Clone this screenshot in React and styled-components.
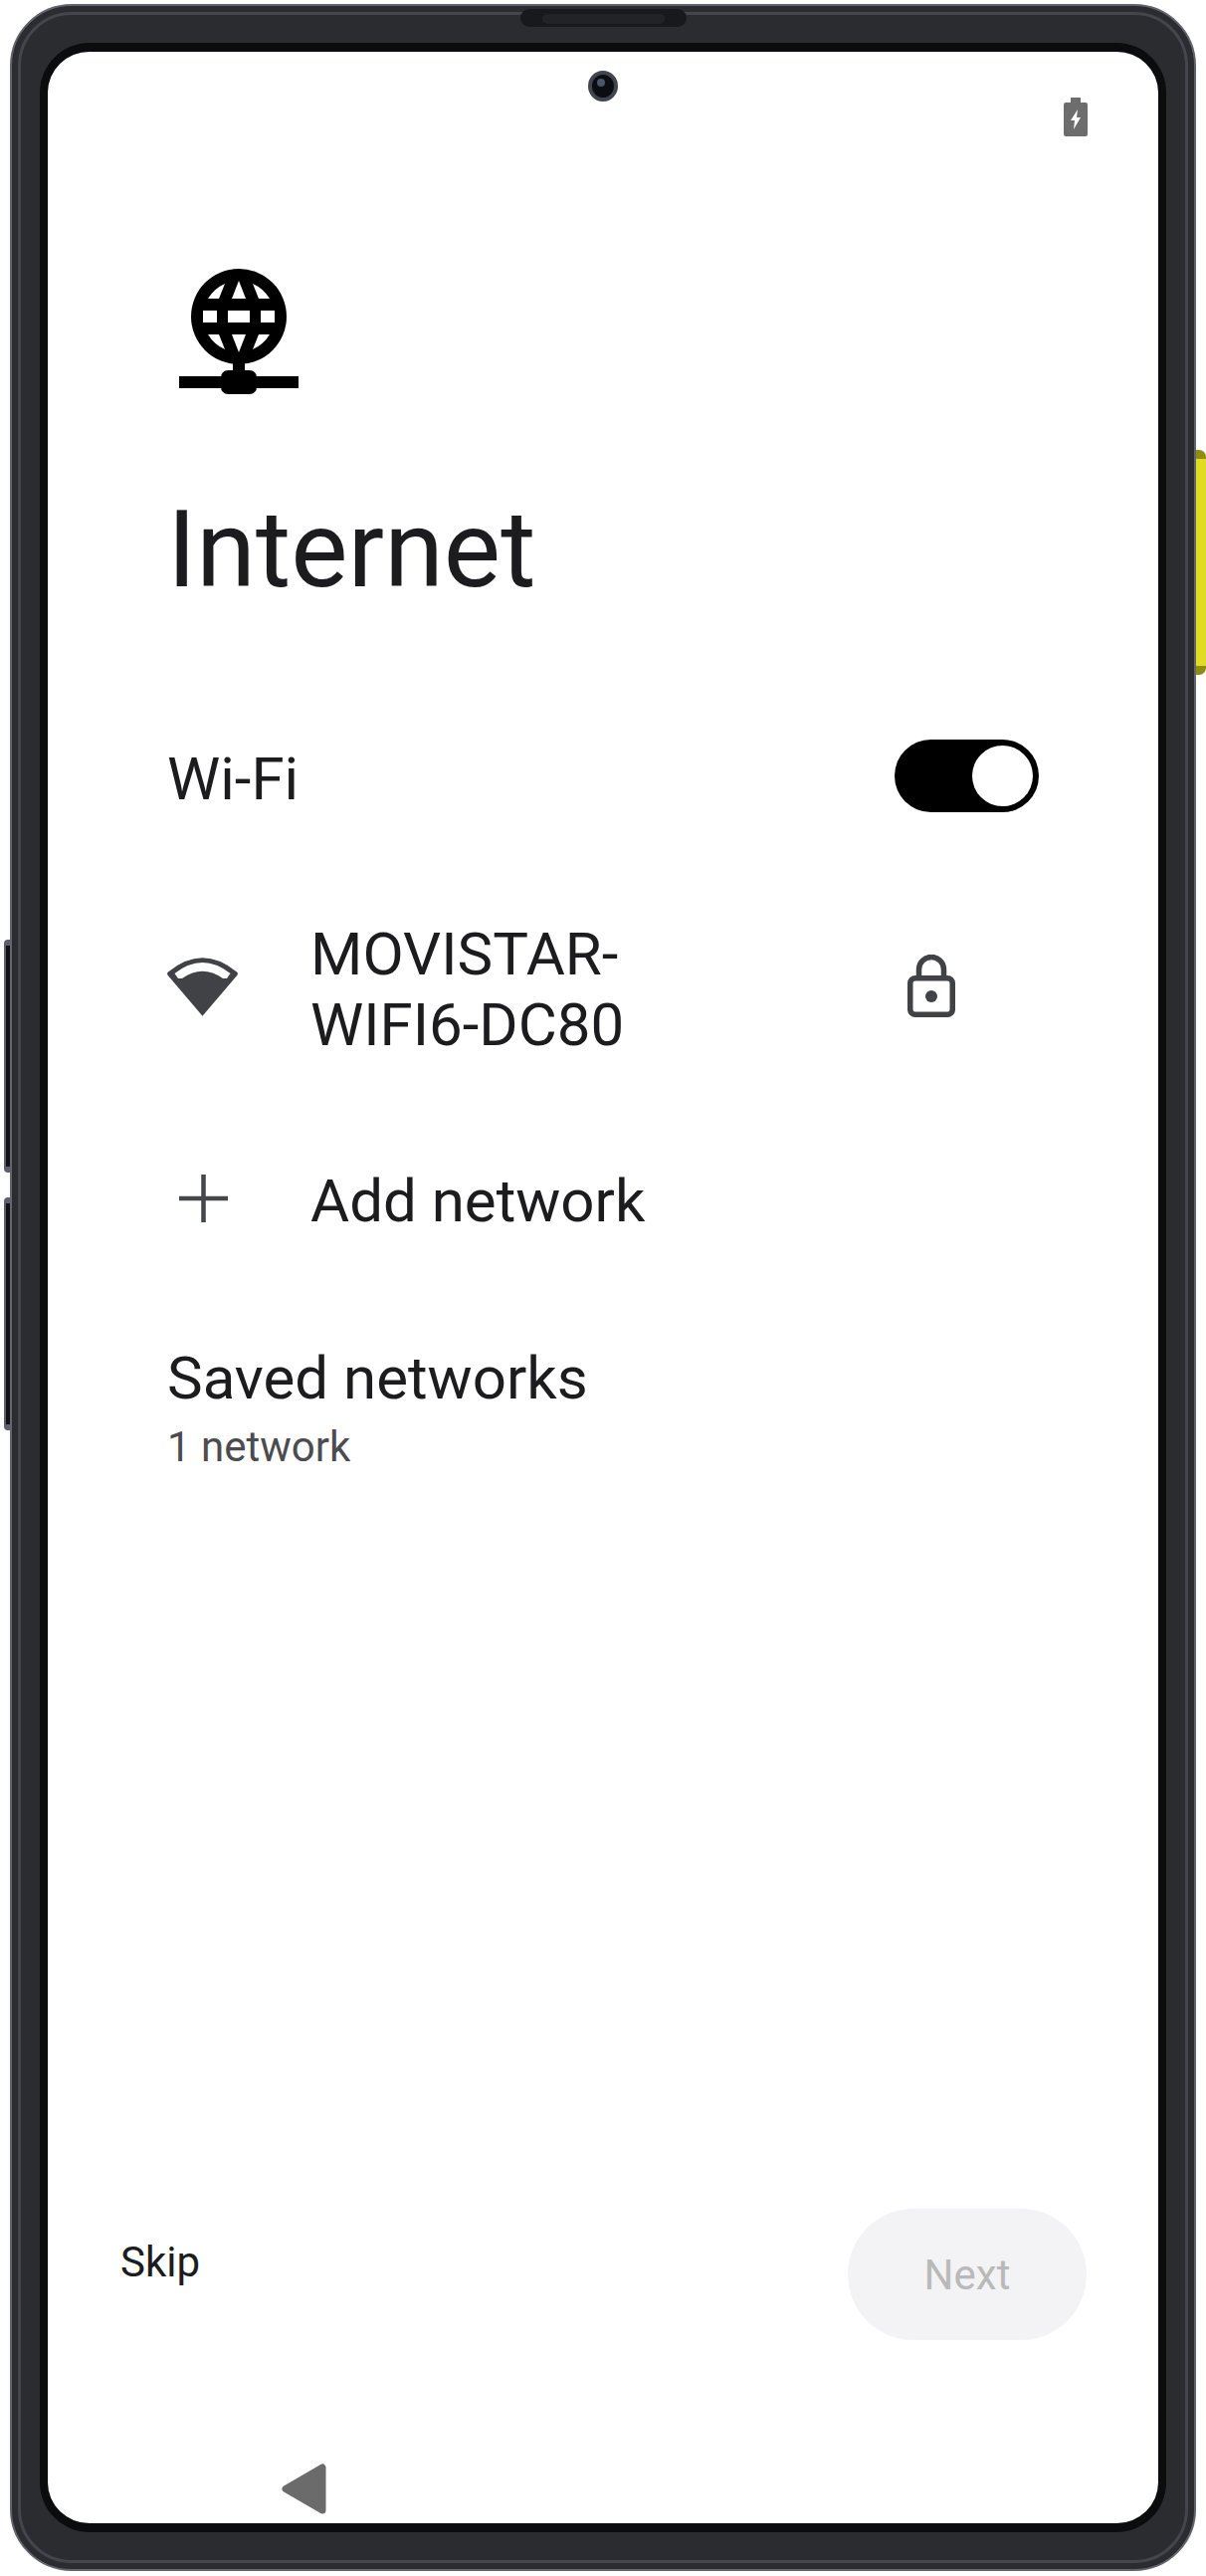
import React from "react";
import styled, { createGlobalStyle } from "styled-components";

const Global = createGlobalStyle`
  html, body { margin: 0; padding: 0; background: #fff; }
  * { box-sizing: border-box; }
`;

const Page = styled.div`
  position: relative;
  width: 1212px;
  height: 2588px;
  padding: 4px 10px 5px;
  background: #fff;
  font-family: Roboto, "Liberation Sans", sans-serif;
  overflow: hidden;
`;

const VolumeKey = styled.div`
  position: absolute;
  left: 4px;
  top: ${(p) => p.$top}px;
  width: 7px;
  height: 234px;
  background: #101114;
  border: 2px solid #5d606b;
  border-right: 0;
  border-width: 6px 0 6px 2px;
  border-radius: 4px 0 0 4px;
`;

const PowerKey = styled.div`
  position: absolute;
  left: 1202px;
  top: 452px;
  width: 10px;
  height: 226px;
  background: #dfdc22;
  border-top: 9px solid #8f8c14;
  border-bottom: 9px solid #8f8c14;
  border-radius: 0 7px 7px 0;
`;

const Frame = styled.div`
  position: relative;
  height: 100%;
  padding: 6px;
  background: #2b2c30;
  border: 2px solid #62646e;
  border-radius: 62px;
`;

const Rim = styled.div`
  height: 100%;
  padding: 28px 19px;
  background: #2b2c30;
  border: 3px solid #44454d;
  border-radius: 54px;
`;

const Speaker = styled.div`
  position: absolute;
  left: 511px;
  top: 3px;
  width: 167px;
  height: 18px;
  padding: 5px 22px;
  background: #18191d;
  border-radius: 9px;
`;

const SpeakerGrille = styled.div`
  height: 10px;
  background: #222327;
  border-radius: 5px;
`;

const Screen = styled.div`
  position: relative;
  display: flex;
  flex-direction: column;
  height: 100%;
  background: #fff;
  border: solid #0b0c0e;
  border-width: 9px 8px;
  border-radius: 50px;
  color: #1c1c1e;
`;

const Camera = styled.div`
  position: absolute;
  left: 543px;
  top: 19px;
  width: 30px;
  height: 31px;
  background: #0b0d12;
  border: 4px solid #41454f;
  border-radius: 50%;
`;

const Lens = styled.div`
  width: 8px;
  height: 8px;
  margin: 4px 0 0 5px;
  background: #4b566b;
  border-radius: 50%;
`;

const StatusBar = styled.div`
  display: flex;
  justify-content: flex-end;
  padding: 46px 71px 0 0;
  height: 85px;
  svg { display: block; }
`;

const Content = styled.div`
  padding: 133px 120px 0;
`;

const HeroIcon = styled.svg`
  display: block;
  margin-left: 12px;
`;

const Title = styled.h1`
  margin: 95px 0 0 0;
  font-size: 108px;
  line-height: 123px;
  font-weight: 400;
`;

const WifiRow = styled.div`
  display: flex;
  align-items: center;
  justify-content: space-between;
  margin-top: 129px;
`;

const RowText = styled.div`
  font-size: 60px;
  line-height: 71px;
  font-weight: 400;
`;

const NetworkName = styled(RowText)`
  max-width: 400px;
`;

const Toggle = styled.div`
  width: 145px;
  height: 73px;
  margin-bottom: 6px;
  padding: 6px;
  display: flex;
  justify-content: flex-end;
  background: #000;
  border-radius: 37px;
`;

const Thumb = styled.div`
  width: 61px;
  height: 61px;
  background: #fff;
  border-radius: 50%;
`;

const NetworkRow = styled.div`
  display: grid;
  grid-template-columns: 144px 1fr 132px;
  align-items: center;
  margin-top: ${(p) => p.$top}px;
  svg { display: block; }
`;

const IconCell = styled.div`
  margin: 0 0 6px ${(p) => p.$left || 0}px;
`;

const Saved = styled.div`
  margin-top: 107px;
`;

const SubText = styled.div`
  font-size: 42px;
  line-height: 49px;
  color: #4c4c50;
  margin-top: 9px;
`;

const Footer = styled.div`
  display: flex;
  justify-content: space-between;
  margin-top: auto;
  padding: 0 72px 0 73px;
`;

const Skip = styled.div`
  font-size: 42px;
  line-height: 49px;
  margin-top: 29px;
`;

const Next = styled.div`
  width: 240px;
  height: 132px;
  display: flex;
  align-items: center;
  justify-content: center;
  background: #f3f3f5;
  color: #b9b9b9;
  font-size: 42px;
  border-radius: 66px;
`;

const NavBar = styled.div`
  padding: 124px 0 9px 235px;
  svg { display: block; }
`;

const Globe = () => (
  <HeroIcon width="120" height="126" viewBox="180 270 120 126">
    <circle cx="240" cy="318" r="48" fill="#000" />
    <g fill="#fff">
      <path d="M240 282 L247 300 H233 Z" />
      <path d="M226 285 L220 300 H209 Q215 290 226 285 Z" />
      <path d="M254 285 L260 300 H271 Q265 290 254 285 Z" />
      <rect x="204" y="312" width="14" height="12" />
      <rect x="229" y="312" width="22" height="12" />
      <rect x="262" y="312" width="14" height="12" />
      <path d="M240 354 L247 336 H233 Z" />
      <path d="M226 351 L220 336 H209 Q215 346 226 351 Z" />
      <path d="M254 351 L260 336 H271 Q265 346 254 351 Z" />
    </g>
    <rect x="234" y="364" width="12" height="10" fill="#000" />
    <rect x="180" y="378" width="120" height="12" fill="#000" />
    <rect x="222" y="372" width="36" height="24" rx="7" fill="#000" />
  </HeroIcon>
);

const Battery = () => (
  <svg width="24" height="39" viewBox="0 0 24 39">
    <path d="M7 0 H17 V5 H22 Q24 5 24 7 V37 Q24 39 22 39 H2 Q0 39 0 37 V7 Q0 5 2 5 H7 Z" fill="#6d6d6d" />
    <path d="M14 12 L7 23 H11 L10 32 L17 20 H13 Z" fill="#fff" />
  </svg>
);

const WifiIcon = () => (
  <svg width="71" height="59" viewBox="0 0 71 59">
    <path d="M35.5 58.7 L0.8 18 Q-0.8 16 1 14.5 Q35.5 -14 70 14.5 Q71.8 16 70.2 18 Z" fill="#414246" />
    <path d="M7.5 16 Q35.5 -6 63.5 16 L60 21 H56 Q35.5 6.4 15 21 H11 Z" fill="#fff" />
  </svg>
);

const LockIcon = () => (
  <svg width="48" height="64" viewBox="0 0 48 64" fill="none">
    <path d="M11.5 22 V15 A12.5 12.5 0 0 1 36.5 15 V22" stroke="#414246" strokeWidth="5.5" />
    <rect x="2.75" y="23.75" width="42.5" height="36.5" rx="5" stroke="#414246" strokeWidth="5.5" />
    <circle cx="24" cy="42" r="6" fill="#414246" />
  </svg>
);

const PlusIcon = () => (
  <svg width="49" height="48" viewBox="0 0 49 48">
    <path d="M24.5 0 V48 M0 24 H49" stroke="#46474c" strokeWidth="4.5" />
  </svg>
);

const BackIcon = () => (
  <svg width="46" height="51" viewBox="0 0 46 51">
    <path d="M4 25.5 L41 4 V47 Z" fill="#6b6b6b" stroke="#6b6b6b" strokeWidth="7" strokeLinejoin="round" />
  </svg>
);

export default function App() {
  return (
    <Page>
      <Global />
      <VolumeKey $top={944} />
      <VolumeKey $top={1203} />
      <PowerKey />
      <Frame>
        <Speaker>
          <SpeakerGrille />
        </Speaker>
        <Rim>
          <Screen>
            <Camera>
              <Lens />
            </Camera>
            <StatusBar>
              <Battery />
            </StatusBar>
            <Content>
              <Globe />
              <Title>Internet</Title>
              <WifiRow>
                <RowText>Wi-Fi</RowText>
                <Toggle>
                  <Thumb />
                </Toggle>
              </WifiRow>
              <NetworkRow $top={101}>
                <IconCell>
                  <WifiIcon />
                </IconCell>
                <NetworkName>MOVISTAR-WIFI6-DC80</NetworkName>
                <IconCell>
                  <LockIcon />
                </IconCell>
              </NetworkRow>
              <NetworkRow $top={106}>
                <IconCell $left={12}>
                  <PlusIcon />
                </IconCell>
                <RowText>Add network</RowText>
              </NetworkRow>
              <Saved>
                <RowText>Saved networks</RowText>
                <SubText>1 network</SubText>
              </Saved>
            </Content>
            <Footer>
              <Skip>Skip</Skip>
              <Next>Next</Next>
            </Footer>
            <NavBar>
              <BackIcon />
            </NavBar>
          </Screen>
        </Rim>
      </Frame>
    </Page>
  );
}
